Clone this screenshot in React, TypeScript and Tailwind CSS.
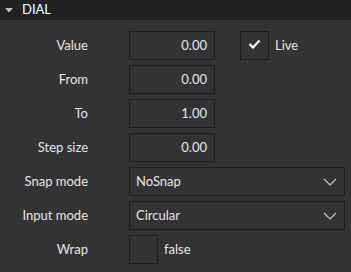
const FONT = { fontFamily: '"Segoe UI", Lato, "Noto Sans", sans-serif' };

function Chevron() {
  return (
    <svg width="14" height="8" viewBox="0 0 14 8">
      <path d="M1 1 L7 7 L13 1" fill="none" stroke="#c8c8c8" strokeWidth="1.2" />
    </svg>
  );
}

function NumberBox({ value }: { value: string }) {
  return (
    <div className="flex h-[29px] w-[86px] items-center justify-end border border-[#1c1c1c] bg-[#333333] pr-[7px] text-[13px] text-[#e6e6e6]">
      {value}
    </div>
  );
}

function Select({ value }: { value: string }) {
  return (
    <div className="flex h-[29px] w-[216px] items-center justify-between border border-[#1c1c1c] bg-[#333333] pl-[6px] pr-[7px] text-[13px] text-[#e6e6e6]">
      <span>{value}</span>
      <Chevron />
    </div>
  );
}

function Row({ label, children }: { label: string; children: React.ReactNode }) {
  return (
    <div className="flex h-[29px] items-center">
      <div className="w-[89px] pr-[1px] text-right text-[13px] text-[#e6e6e6]">{label}</div>
      <div className="ml-[40px] flex items-center">{children}</div>
    </div>
  );
}

export default function App() {
  return (
    <div className="h-[272px] w-[351px] bg-[#333333]" style={FONT}>
      <div className="flex h-[20px] items-center bg-[#212121]">
        <svg width="8" height="5" viewBox="0 0 8 5" className="ml-[5px]">
          <path d="M0 0 L8 0 L4 4.5 Z" fill="#bdbdbd" />
        </svg>
        <span className="ml-[9px] text-[13px] text-white">DIAL</span>
      </div>

      <div className="mt-[11px] flex flex-col gap-[5px]">
        <Row label="Value">
          <NumberBox value="0.00" />
          <div className="ml-[25px] flex h-[29px] w-[29px] items-start justify-center border border-[#1c1c1c] pt-[7px]">
            <svg width="13" height="10" viewBox="0 0 13 10">
              <path d="M1.5 5 L5 8.5 L11.5 1.5" fill="none" stroke="#ffffff" strokeWidth="2.2" />
            </svg>
          </div>
          <span className="ml-[6px] text-[13px] text-[#e6e6e6]">Live</span>
        </Row>
        <Row label="From">
          <NumberBox value="0.00" />
        </Row>
        <Row label="To">
          <NumberBox value="1.00" />
        </Row>
        <Row label="Step size">
          <NumberBox value="0.00" />
        </Row>
        <Row label="Snap mode">
          <Select value="NoSnap" />
        </Row>
        <Row label="Input mode">
          <Select value="Circular" />
        </Row>
        <Row label="Wrap">
          <div className="h-[29px] w-[29px] border border-[#1c1c1c]" />
          <span className="ml-[6px] text-[13px] text-[#e6e6e6]">false</span>
        </Row>
      </div>
    </div>
  );
}
